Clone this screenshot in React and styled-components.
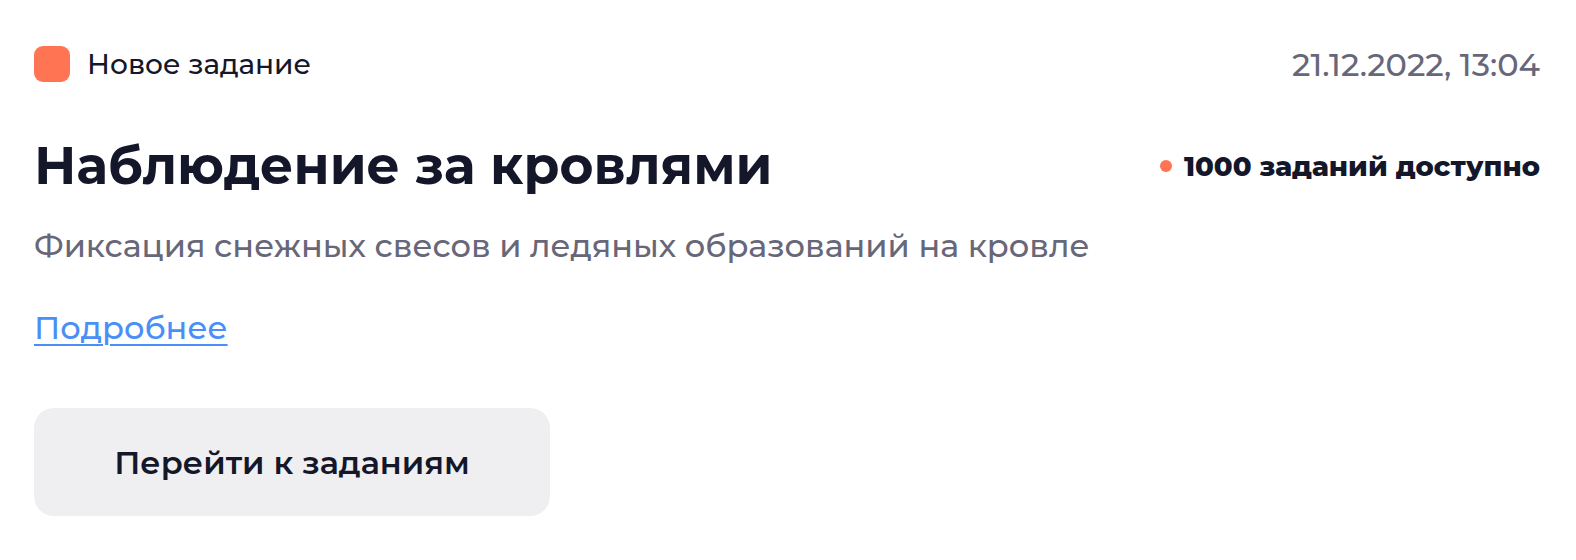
import React from "react";
import styled, { createGlobalStyle } from "styled-components";

const GlobalStyle = createGlobalStyle`
  body {
    margin: 0;
    background: #ffffff;
    font-family: Montserrat, Inter, "Noto Sans", sans-serif;
    color: #141729;
  }
`;

const Card = styled.section`
  padding: 46px 36px 0 34px;
  display: flex;
  flex-direction: column;
`;

const TopRow = styled.div`
  display: flex;
  justify-content: space-between;
  align-items: center;
  height: 36px;
`;

const Status = styled.div`
  display: flex;
  align-items: center;
  gap: 17px;
  font-size: 28px;
  font-weight: 500;
  color: #141729;
`;

const StatusMark = styled.span`
  width: 36px;
  height: 36px;
  border-radius: 9px;
  background: #ff7452;
`;

const Date = styled.span`
  font-size: 32px;
  font-weight: 500;
  color: #676779;
`;

const TitleRow = styled.div`
  display: flex;
  justify-content: space-between;
  align-items: center;
  margin-top: 52px;
`;

const Title = styled.h1`
  margin: 0;
  font-size: 52px;
  line-height: 64px;
  font-weight: 700;
  color: #141729;
`;

const Available = styled.span`
  display: flex;
  align-items: center;
  gap: 12px;
  font-size: 27.5px;
  font-weight: 800;
  color: #141729;

  &::before {
    content: "";
    width: 12px;
    height: 12px;
    border-radius: 50%;
    background: #ff7452;
  }
`;

const Description = styled.p`
  margin: 28px 0 0;
  font-size: 32px;
  line-height: 40px;
  font-weight: 500;
  color: #676779;
`;

const More = styled.a`
  align-self: flex-start;
  margin-top: 42px;
  font-size: 32px;
  line-height: 40px;
  font-weight: 500;
  color: #4a8ff7;
  text-decoration: underline;
  text-decoration-thickness: 2px;
  text-underline-offset: 5px;
  cursor: pointer;
`;

const GoButton = styled.button`
  align-self: flex-start;
  margin-top: 60px;
  width: 516px;
  height: 108px;
  border: none;
  border-radius: 20px;
  background: #efeff2;
  font-family: inherit;
  font-size: 32px;
  font-weight: 600;
  color: #141729;
  cursor: pointer;
`;

export default function App() {
  return (
    <>
      <GlobalStyle />
      <Card>
        <TopRow>
          <Status>
            <StatusMark />
            Новое задание
          </Status>
          <Date>21.12.2022, 13:04</Date>
        </TopRow>
        <TitleRow>
          <Title>Наблюдение за кровлями</Title>
          <Available>1000 заданий доступно</Available>
        </TitleRow>
        <Description>
          Фиксация снежных свесов и ледяных образований на кровле
        </Description>
        <More>Подробнее</More>
        <GoButton>Перейти к заданиям</GoButton>
      </Card>
    </>
  );
}
